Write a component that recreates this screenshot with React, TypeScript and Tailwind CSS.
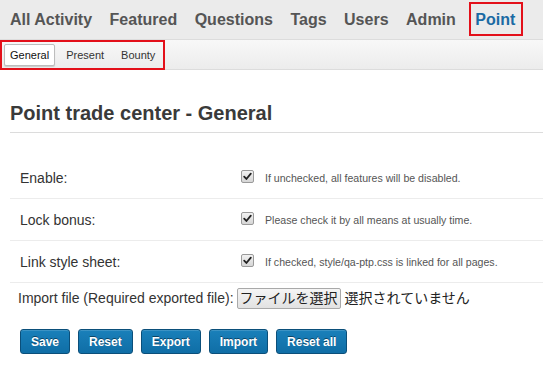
import React from 'react';

const navItems = ['All Activity', 'Featured', 'Questions', 'Tags', 'Users', 'Admin'];
const subItems = ['General', 'Present', 'Bounty'];

const rows = [
  { label: 'Enable:', note: 'If unchecked, all features will be disabled.' },
  { label: 'Lock bonus:', note: 'Please check it by all means at usually time.' },
  { label: 'Link style sheet:', note: 'If checked, style/qa-ptp.css is linked for all pages.' },
];

const buttons = ['Save', 'Reset', 'Export', 'Import', 'Reset all'];

const CheckBox: React.FC = () => (
  <span className="inline-flex items-center justify-center w-[13px] h-[13px] rounded-[2px] border border-[#9a9a9a] bg-gradient-to-b from-[#f2f2f2] to-[#d6d6d6]">
    <svg width="9" height="9" viewBox="0 0 9 9">
      <path d="M1.2 4.6 L3.4 7 L7.8 1.6" fill="none" stroke="#222" strokeWidth="1.8" strokeLinecap="round" strokeLinejoin="round" />
    </svg>
  </span>
);

const App: React.FC = () => {
  return (
    <div className="w-[543px] h-[374px] bg-white overflow-hidden font-['Liberation_Sans','Noto_Sans_CJK_JP',sans-serif] text-[#333]">
      {/* main nav */}
      <div className="h-[40px] bg-[#ebebeb] border-b border-[#dcdcdc] flex items-center pl-[10px] gap-[17.5px] pt-[1px]">
        {navItems.map((item) => (
          <span key={item} className="text-[16px] font-bold text-[#555] leading-none">
            {item}
          </span>
        ))}
        <span className="relative text-[16px] font-bold text-[#1a6aa3] leading-none ml-[2px]">
          Point
          <span className="absolute -left-[6px] -right-[8px] -top-[10px] -bottom-[8px] border-2 border-[#e3101a]" />
        </span>
      </div>

      {/* sub nav */}
      <div className="h-[30px] bg-gradient-to-b from-[#f8f8f8] to-[#ececec] border-b border-[#dcdcdc]">
        <div className="w-[165px] h-[30px] border-2 border-[#e3101a] flex items-center pl-[2px]">
          {subItems.map((item, i) => (
            <span
              key={item}
              className={
                i === 0
                  ? 'h-[22px] px-[5px] flex items-center text-[11px] text-[#111] bg-white border border-[#bdbdbd] rounded-[2px] shadow-[0_1px_1px_rgba(0,0,0,0.15)]'
                  : 'h-[22px] px-[6px] ml-[5px] flex items-center text-[11px] text-[#333]'
              }
            >
              {item}
            </span>
          ))}
        </div>
      </div>

      {/* content */}
      <div className="pl-[10px]">
        <h1 className="mt-[31px] pb-[7px] text-[20px] font-bold text-[#3a3a3a] leading-[24px] border-b border-[#dcdcdc]">
          Point trade center - General
        </h1>

        <div className="mt-[24px]">
          {rows.map((row) => (
            <div key={row.label} className="h-[42px] flex items-center border-b border-[#ececec]">
              <span className="w-[231px] pl-[10px] text-[14px] text-[#333] pt-[1px]">{row.label}</span>
              <span className="-mt-[3px] flex">
                <CheckBox />
              </span>
              <span className="ml-[11px] text-[10.6px] text-[#555] pt-[2px]">{row.note}</span>
            </div>
          ))}
        </div>

        <div className="h-[30px] flex items-center pl-[8px] pt-[1px] text-[14px] text-[#333]">
          <span>Import file (Required exported file):</span>
          <span className="ml-[3px] h-[21px] w-[104px] flex items-center justify-center border border-[#a9a9a9] rounded-[2px] bg-gradient-to-b from-[#f5f5f5] to-[#e2e2e2] text-[14px] text-[#222]">
            ファイルを選択
          </span>
          <span className="ml-[4px] text-[#222]">選択されていません</span>
        </div>

        <div className="mt-[16px] pl-[10px] flex gap-[8px]">
          {buttons.map((b) => (
            <span
              key={b}
              className="h-[25px] px-[10px] flex items-center border border-[#0b4f7a] rounded-[3px] bg-gradient-to-b from-[#1a80ba] to-[#0f6ea6] text-white text-[12px] font-bold [text-shadow:0_-1px_0_rgba(0,0,0,0.45)] shadow-[inset_0_1px_0_rgba(255,255,255,0.15)]"
            >
              {b}
            </span>
          ))}
        </div>
      </div>
    </div>
  );
};

export default App;
